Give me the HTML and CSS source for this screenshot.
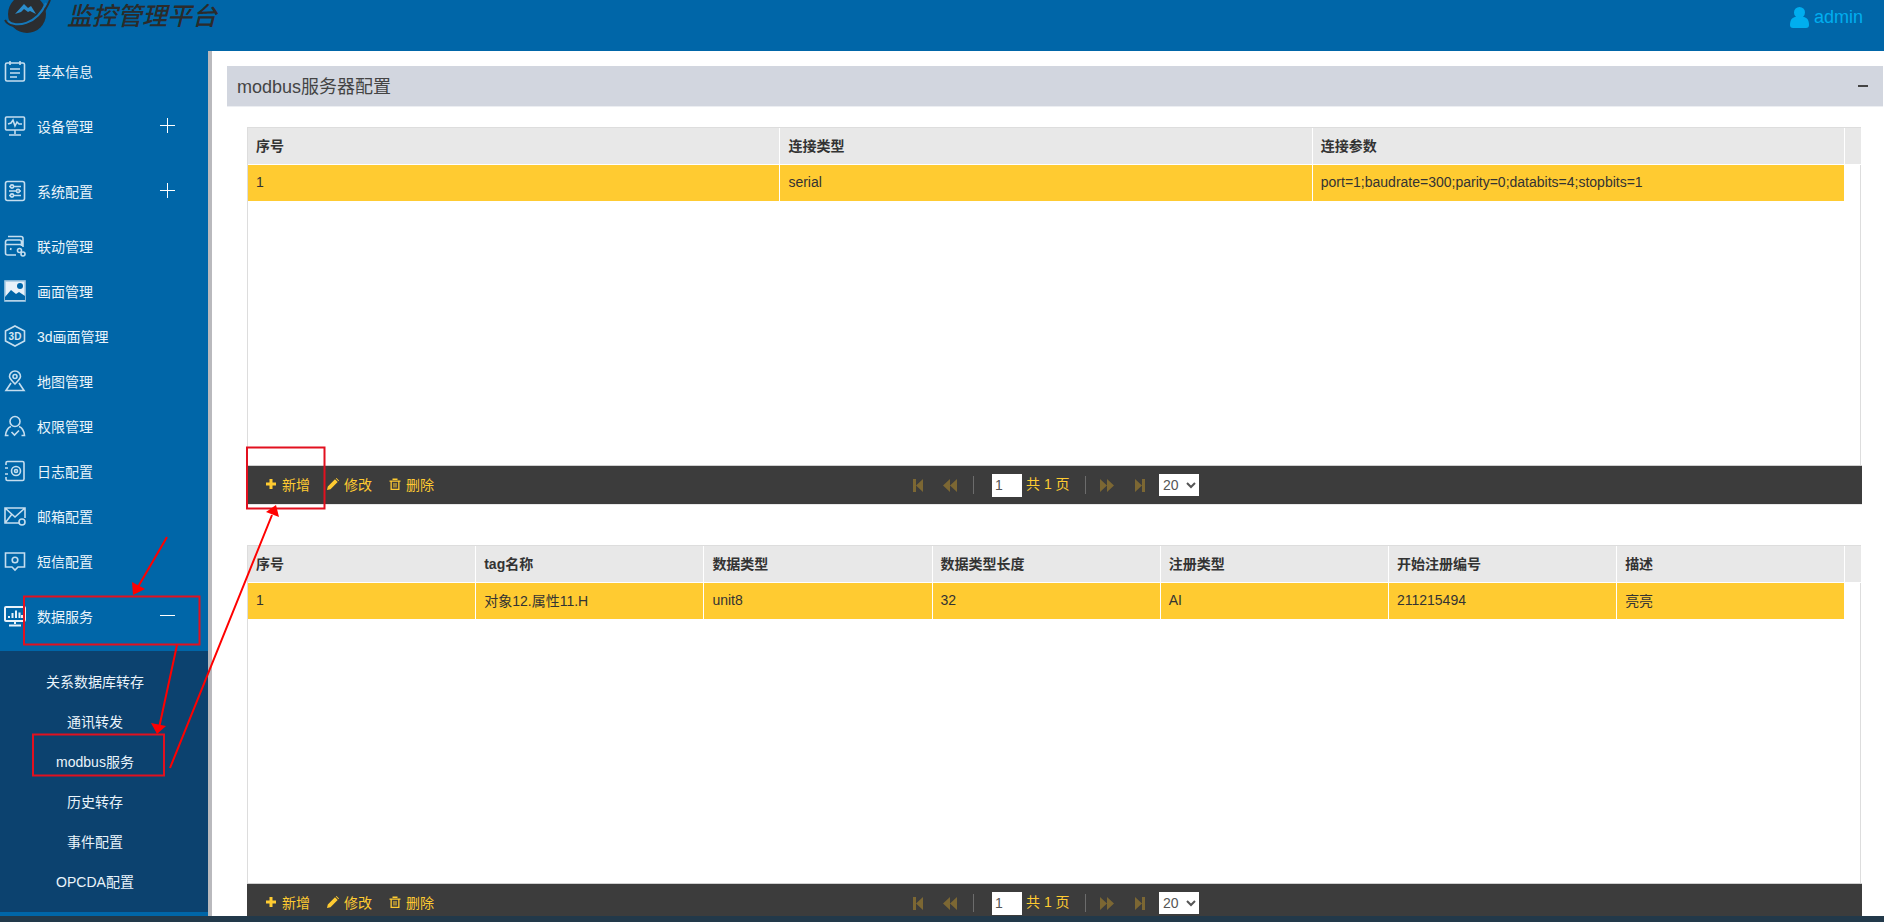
FILE: index.html
```html
<!DOCTYPE html>
<html lang="en">
<head>
    <meta charset="UTF-8">
    <title>监控管理平台</title>
    <link rel="stylesheet" href="styles.css">
</head>
<body>
    <header class="topbar">
        <svg class="logo" viewBox="0 0 56 36">
            <circle cx="27" cy="14" r="19" fill="#2b2d30"/>
            <path d="M5 20C11 31 38 30 50 0" fill="none" stroke="#2b2d30" stroke-width="2"/>
            <path d="M8 21C15 28 37 25 46 3" fill="none" stroke="#1577b8" stroke-width="2"/>
            <path d="M15 14L24 4 28 8 31 6 36 14 30 11 28 12 24 9 21 12Z" fill="#2a8ccb"/>
        </svg>
        <div class="brand">监控管理平台</div>
        <div class="user">
            <svg class="user-icon" viewBox="0 0 19 21"><circle cx="9.5" cy="5.5" r="5.5"/><path d="M0 18 C0 12 3 10 6 10 H13 C16 10 19 12 19 18 C19 20 18 21 16 21 H3 C1 21 0 20 0 18Z"/></svg>
            <span>admin</span>
        </div>
    </header>

    <div class="main">
        <nav class="sidebar">
            <div class="menu-item first">
                <svg class="icon" viewBox="0 0 22 22"><rect x="1.5" y="3" width="19" height="18" rx="1.5"/><path d="M6 1v4M16 1v4M6 9h10M6 13h10M6 17h7"/></svg>
                <span>基本信息</span>
            </div>
            <div class="menu-item has-sub">
                <svg class="icon" viewBox="0 0 22 22"><rect x="1.5" y="2" width="19" height="13" rx="1"/><path d="M4 9l3-1 2-3 2 6 2-4 2 2h3M11 15v4M5 20h12"/></svg>
                <span>设备管理</span>
                <span class="toggle plus"></span>
            </div>
            <div class="menu-item has-sub">
                <svg class="icon" viewBox="0 0 22 22"><rect x="1.5" y="1.5" width="19" height="19" rx="2"/><path d="M5 6.5h12M5 11h12M5 15.5h12"/><circle cx="8" cy="6.5" r="1.6" class="hole"/><circle cx="14" cy="11" r="1.6" class="hole"/><circle cx="8" cy="15.5" r="1.6" class="hole"/></svg>
                <span>系统配置</span>
                <span class="toggle plus"></span>
            </div>
            <div class="menu-item">
                <svg class="icon" viewBox="0 0 22 22"><path d="M4 1.5h13a2 2 0 0 1 2 2V12M1.5 7a2 2 0 0 1 2-2h12a2 2 0 0 1 2 2v4M1.5 7v11a2 2 0 0 0 2 2H12M1.5 9.5h16M7 13l-.5 2"/><circle cx="15.5" cy="15.5" r="2"/><circle cx="19" cy="19" r="2"/></svg>
                <span>联动管理</span>
            </div>
            <div class="menu-item">
                <svg class="icon" viewBox="0 0 22 22"><rect x="1" y="1" width="20" height="20" fill="#e9f2f9" stroke="#a9cbe3"/><path d="M1 17l6-7 5 4 3-2 6 4v4H1z" fill="#0066a8" stroke="none"/><circle cx="16" cy="6" r="3" fill="#0066a8" stroke="none"/></svg>
                <span>画面管理</span>
            </div>
            <div class="menu-item">
                <svg class="icon" viewBox="0 0 22 22"><path d="M11 1l9.5 5v10L11 21l-9.5-5V6z"/><text x="11" y="15" class="icon-text">3D</text></svg>
                <span>3d画面管理</span>
            </div>
            <div class="menu-item">
                <svg class="icon" viewBox="0 0 22 22"><path d="M11 14C7 10 5.500 8.500 5.500 6.500a5.500 5.500 0 0 1 11 0C16.500 8.500 15 10 11 14Z"/><circle cx="11" cy="6.500" r="2"/><path d="M7 13l-5 7.500h18L15 13"/></svg>
                <span>地图管理</span>
            </div>
            <div class="menu-item">
                <svg class="icon" viewBox="0 0 22 22"><circle cx="11" cy="6.500" r="5"/><path d="M7 11.500C3 13 2 16 1.500 20.500h3M15 11.500c4 1.500 5 4.500 5.500 9h-3M7.500 17l3 3 4.500-4.500"/></svg>
                <span>权限管理</span>
            </div>
            <div class="menu-item">
                <svg class="icon" viewBox="0 0 22 22"><path d="M2 5V3a1.500 1.500 0 0 1 1.500-1.500h15A1.500 1.500 0 0 1 20 3v16a1.500 1.500 0 0 1-1.500 1.500h-15A1.500 1.500 0 0 1 2 19v-2M1 8h3M1 14h3"/><circle cx="12" cy="11" r="4.500"/><circle cx="12" cy="11" r="1.500"/></svg>
                <span>日志配置</span>
            </div>
            <div class="menu-item">
                <svg class="icon" viewBox="0 0 22 22"><path d="M15 18H1V3h20v10M1.500 3.500L11 12l9.500-8.500M1.500 17.500L8 9"/><circle cx="18" cy="17" r="3"/></svg>
                <span>邮箱配置</span>
            </div>
            <div class="menu-item">
                <svg class="icon" viewBox="0 0 22 22"><path d="M1.500 3h19v14H14l-3 3-3-3H1.500z"/><circle cx="11" cy="10" r="2.800"/></svg>
                <span>短信配置</span>
            </div>
            <div class="menu-item has-sub">
                <svg class="icon strong" viewBox="0 0 22 22"><rect x="1" y="2" width="20" height="14" rx="1"/><path d="M5 13v-2M8.500 13V8M12 13V5.500M15.500 13V7.500M18 13V10M11 16v3M5 20.500h12"/></svg>
                <span>数据服务</span>
                <span class="toggle"></span>
            </div>
            <div class="submenu">
                <div class="sub-item">关系数据库转存</div>
                <div class="sub-item">通讯转发</div>
                <div class="sub-item">modbus服务</div>
                <div class="sub-item">历史转存</div>
                <div class="sub-item">事件配置</div>
                <div class="sub-item">OPCDA配置</div>
            </div>
        </nav>

        <main class="content">
            <div class="panel-head">
                <span class="panel-title">modbus服务器配置</span>
                <span class="collapse"></span>
            </div>
            <div class="panel-body">
                <div class="grid">
                    <table class="grid-table">
                        <colgroup>
                            <col class="c3"><col class="c3"><col class="c3"><col>
                        </colgroup>
                        <tr><th>序号</th><th>连接类型</th><th>连接参数</th><th></th></tr>
                        <tr class="selected"><td>1</td><td>serial</td><td>port=1;baudrate=300;parity=0;databits=4;stopbits=1</td><td class="blank"></td></tr>
                    </table>
                </div>
                <div class="toolbar">
                    <div class="actions">
                        <span class="action"><svg viewBox="0 0 12 12"><path d="M4.500 1h3v3.500H11v3H7.500V11h-3V7.500H1v-3h3.500z"/></svg>新增</span>
                        <span class="action"><svg viewBox="0 0 12 12"><path d="M0 12l.8-3.500L8 1.300 10.700 4 3.500 11.200zM8.800.5l.7-.5 2.500 2.500-.6.7z"/></svg>修改</span>
                        <span class="action"><svg viewBox="0 0 12 12"><path d="M.5 2.500h11v1.200h-1V12h-9V3.700h-1zM3.500.5h5v1.500h-5zM2.800 3.700v7h6.400v-7zM4.500 5h1v4.500h-1zM6.500 5h1v4.500h-1z" fill-rule="evenodd"/></svg>删除</span>
                    </div>
                    <div class="pager">
                        <svg class="pg" viewBox="0 0 10 13"><path d="M0 0h3v13H0zM10 0v13L3 6.500z"/></svg>
                        <svg class="pg wide" viewBox="0 0 14 13"><path d="M7 0v13L0 6.500zM14 0v13L7 6.500z"/></svg>
                        <span class="sep"></span>
                        <input class="page-input" value="1">
                        <span class="page-text">共 1 页</span>
                        <span class="sep tight"></span>
                        <svg class="pg wide next" viewBox="0 0 14 13"><path d="M0 0v13l7-6.500zM7 0v13l7-6.500z"/></svg>
                        <svg class="pg" viewBox="0 0 10 13"><path d="M0 0v13l7-6.500zM7 0h3v13H7z"/></svg>
                        <select class="page-size"><option>20</option></select>
                    </div>
                </div>

                <div class="grid">
                    <table class="grid-table">
                        <colgroup>
                            <col class="c7"><col class="c7"><col class="c7"><col class="c7"><col class="c7"><col class="c7"><col class="c7"><col>
                        </colgroup>
                        <tr><th>序号</th><th>tag名称</th><th>数据类型</th><th>数据类型长度</th><th>注册类型</th><th>开始注册编号</th><th>描述</th><th></th></tr>
                        <tr class="selected"><td>1</td><td>对象12.属性11.H</td><td>unit8</td><td>32</td><td>AI</td><td>211215494</td><td>亮亮</td><td class="blank"></td></tr>
                    </table>
                </div>
                <div class="toolbar">
                    <div class="actions">
                        <span class="action"><svg viewBox="0 0 12 12"><path d="M4.500 1h3v3.500H11v3H7.500V11h-3V7.500H1v-3h3.500z"/></svg>新增</span>
                        <span class="action"><svg viewBox="0 0 12 12"><path d="M0 12l.8-3.500L8 1.300 10.700 4 3.500 11.200zM8.800.5l.7-.5 2.500 2.500-.6.7z"/></svg>修改</span>
                        <span class="action"><svg viewBox="0 0 12 12"><path d="M.5 2.500h11v1.200h-1V12h-9V3.700h-1zM3.500.5h5v1.500h-5zM2.800 3.700v7h6.400v-7zM4.500 5h1v4.500h-1zM6.500 5h1v4.500h-1z" fill-rule="evenodd"/></svg>删除</span>
                    </div>
                    <div class="pager">
                        <svg class="pg" viewBox="0 0 10 13"><path d="M0 0h3v13H0zM10 0v13L3 6.500z"/></svg>
                        <svg class="pg wide" viewBox="0 0 14 13"><path d="M7 0v13L0 6.500zM14 0v13L7 6.500z"/></svg>
                        <span class="sep"></span>
                        <input class="page-input" value="1">
                        <span class="page-text">共 1 页</span>
                        <span class="sep tight"></span>
                        <svg class="pg wide next" viewBox="0 0 14 13"><path d="M0 0v13l7-6.500zM7 0v13l7-6.500z"/></svg>
                        <svg class="pg" viewBox="0 0 10 13"><path d="M0 0v13l7-6.500zM7 0h3v13H7z"/></svg>
                        <select class="page-size"><option>20</option></select>
                    </div>
                </div>
            </div>
        </main>
    </div>

    <div class="bottom-strip"></div>

    <!-- red notes drawn over the screenshot -->
    <svg class="notes" viewBox="0 0 1884 922">
        <rect x="24" y="596.500" width="175.500" height="48"/>
        <rect x="33" y="734.500" width="131" height="41"/>
        <rect x="247" y="447.500" width="77.500" height="61"/>
        <path d="M167 537L135 592M177 645L159 728M170 768L272 515"/>
        <polygon points="133,595 132,582 145,589"/>
        <polygon points="157,734 151,723 166,726"/>
        <polygon points="276,505 266,512 279,517"/>
    </svg>
</body>
</html>
```

FILE: styles.css
```css
* {
    margin: 0;
    padding: 0;
    box-sizing: border-box;
}

body {
    height: 100vh;
    display: flex;
    flex-direction: column;
    overflow: hidden;
    background-color: #fff;
    font-family: "Liberation Sans", "Noto Sans CJK SC", sans-serif;
    font-size: 14px;
    color: #333;
}

/* top bar */
.topbar {
    height: 51px;
    flex: none;
    display: flex;
    align-items: flex-start;
    overflow: hidden;
    background-color: #0066a8;
}

.logo {
    width: 56px;
    height: 36px;
    flex: none;
}

.brand {
    margin-left: 11px;
    font-size: 25px;
    line-height: 32px;
    font-style: italic;
    font-weight: 500;
    color: #2b2b2b;
}

.user {
    margin-left: auto;
    margin-right: 21px;
    display: flex;
    align-items: center;
    gap: 5px;
    height: 35px;
    font-size: 18px;
    color: #00aeef;
}

.user-icon {
    width: 19px;
    height: 21px;
    fill: #00aeef;
}

.main {
    flex: 1;
    display: flex;
    min-height: 0;
}

/* left menu */
.sidebar {
    width: 212px;
    flex: none;
    padding-bottom: 4px;
    display: flex;
    flex-direction: column;
    background-color: #0066a8;
    border-right: 4px solid #b9b9bd;
    font-size: 14px;
    color: #eaf4fb;
}

.menu-item {
    height: 45px;
    flex: none;
    display: flex;
    align-items: center;
    padding-left: 4px;
}

.menu-item.first {
    height: 42px;
    padding-bottom: 2px;
}

.menu-item.has-sub {
    height: 65px;
}

.icon {
    width: 22px;
    height: 22px;
    margin-right: 11px;
    flex: none;
    fill: none;
    stroke: #c5deef;
    stroke-width: 1.6;
}

.icon.strong {
    stroke: #e9f2f9;
    stroke-width: 2;
}

.icon .hole {
    fill: #0066a8;
}

.icon-text {
    font-size: 10px;
    font-weight: bold;
    fill: #d5e6f2;
    stroke: none;
    text-anchor: middle;
}

.toggle {
    position: relative;
    width: 15px;
    height: 1px;
    margin-left: 67px;
    background-color: #fff;
}

.toggle.plus::after {
    content: "";
    position: absolute;
    left: 7px;
    top: -7px;
    width: 1px;
    height: 15px;
    background-color: #fff;
}

.submenu {
    flex: 1;
    margin-top: 3px;
    padding-top: 11px;
    background-color: #0c426f;
}

.sub-item {
    width: 190px;
    height: 40px;
    line-height: 40px;
    text-align: center;
}

/* right side */
.content {
    flex: 1;
    min-width: 0;
    padding: 15px 1px 0 15px;
    overflow: hidden;
}

.panel-head {
    height: 41px;
    display: flex;
    align-items: center;
    justify-content: space-between;
    padding: 0 15px 0 10px;
    background-color: #d2d6df;
    border-bottom: 1px solid #eceef2;
}

.panel-title {
    margin-bottom: 3px;
    font-size: 18px;
    color: #444;
}

.collapse {
    width: 10px;
    height: 2px;
    background-color: #444;
}

.panel-body {
    padding: 20px 0 0 20px;
}

.grid {
    width: 1614px;
    height: 338px;
    border: 1px solid #ddd;
    border-bottom: none;
}

.grid-table {
    width: 1614px;
    table-layout: fixed;
    border-collapse: separate;
    border-spacing: 0;
}

.c3 {
    width: 532.4px;
}

.c7 {
    width: 228.2px;
}

.grid-table th,
.grid-table td {
    height: 36px;
    padding: 0 8px 2px;
    text-align: left;
    border-right: 1px solid #fff;
    overflow: hidden;
    white-space: nowrap;
}

.grid-table th {
    height: 37px;
    background-color: #e8e8e8;
    border-bottom: 1px solid #fff;
    font-weight: bold;
}

.selected td {
    background-color: #ffcb31;
}

.selected td.blank {
    background-color: transparent;
    border-right: none;
}

/* grid footer */
.toolbar {
    width: 1615px;
    height: 40px;
    margin-bottom: 40px;
    display: flex;
    align-items: center;
    background-color: #3c3c3c;
    border-top: 1px solid #d0d0d0;
    border-bottom: 1px solid #e8e8e8;
    color: #ffcb31;
}

.actions {
    width: 666px;
    flex: none;
    display: flex;
    gap: 17px;
    padding-left: 18px;
}

.action {
    display: flex;
    align-items: center;
    gap: 5px;
    padding-bottom: 2px;
}

.action svg {
    width: 12px;
    height: 12px;
    fill: #ffcb31;
}

.pager {
    display: flex;
    align-items: center;
}

.pg {
    width: 10px;
    height: 13px;
    margin-right: 20px;
    fill: #7c6733;
}

.pg.wide {
    width: 14px;
    margin-right: 16px;
}

.pg.next {
    margin-right: 21px;
}

.sep {
    width: 1px;
    height: 18px;
    margin-right: 18px;
    background-color: #6c6c6c;
}

.sep.tight {
    margin-right: 14px;
}

.page-input {
    width: 30px;
    height: 23px;
    padding-left: 3px;
    border: none;
    font-family: inherit;
    font-size: 14px;
    color: #555;
}

.page-text {
    width: 63px;
    padding-left: 4px;
    margin-bottom: 5px;
}

.page-size {
    width: 40px;
    height: 22px;
    margin-left: -6px;
    border: none;
    background-color: #fff;
    font-family: inherit;
    font-size: 14px;
    color: #555;
}

.bottom-strip {
    height: 6px;
    flex: none;
    background-color: #22394a;
}

.notes {
    position: absolute;
    left: 0;
    top: 0;
    width: 1884px;
    height: 922px;
    pointer-events: none;
}

.notes rect {
    fill: none;
    stroke: #e2101f;
    stroke-width: 2;
}

.notes path {
    fill: none;
    stroke: #f00;
    stroke-width: 2;
}

.notes polygon {
    fill: #f00;
}
```
